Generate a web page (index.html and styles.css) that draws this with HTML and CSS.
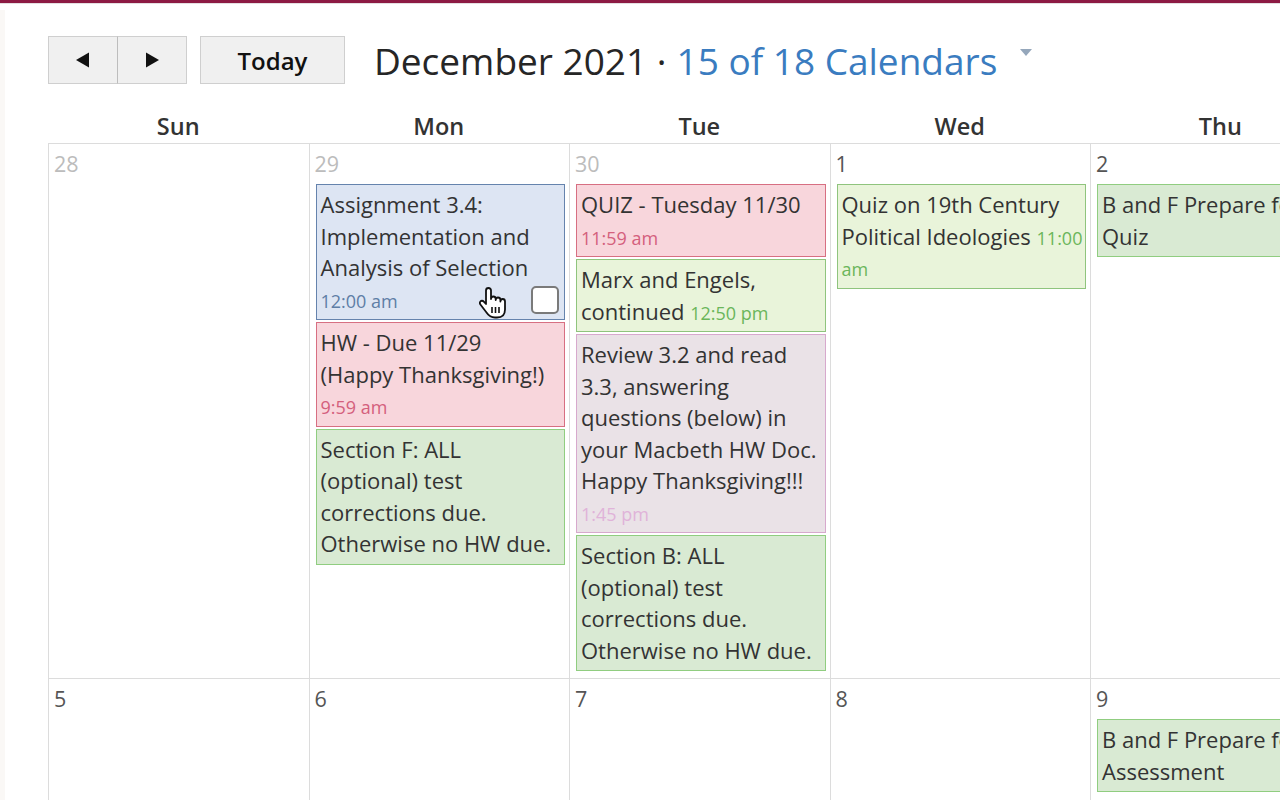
FILE: index.html
```html
<!DOCTYPE html>
<html lang="en">
<head>
<meta charset="utf-8">
<title>December 2021 Calendar</title>
<link rel="stylesheet" href="styles.css">
</head>
<body>
<div class="topbar"></div>
<div class="layout">
  <div class="edge"></div>
  <main class="main">
    <div class="toolbar">
      <div class="btn-group">
        <button class="btn btn-arrow" aria-label="Previous"><svg width="18" height="18" viewBox="0 0 18 18"><path d="M2 9 L15 1.5 V16.5 Z" fill="#111"/></svg></button>
        <button class="btn btn-arrow" aria-label="Next"><svg width="18" height="18" viewBox="0 0 18 18"><path d="M16 9 L3 1.5 V16.5 Z" fill="#111"/></svg></button>
      </div>
      <button class="btn btn-today">Today</button>
      <h1 class="title">December 2021 · <span class="cals">15 of 18 Calendars</span><span class="caret"></span></h1>
    </div>

    <div class="dow">
      <div>Sun</div><div>Mon</div><div>Tue</div><div>Wed</div><div>Thu</div><div>Fri</div><div>Sat</div>
    </div>

    <div class="week week-1">
      <div class="cell"><div class="num other">28</div></div>
      <div class="cell">
        <div class="num other">29</div>
        <div class="ev ev-blue">Assignment 3.4: Implementation and Analysis of Selection <span class="time">12:00 am</span>
          <span class="check"></span>
          <svg class="cursor" width="30" height="34" viewBox="0 0 30 34"><path d="M9.5 2 C8 2 7 3 7 4.5 V18 L4.8 15.6 C3.8 14.5 2.2 14.5 1.4 15.5 C0.6 16.4 0.8 17.8 1.6 18.8 L7.5 26.5 C9.5 29.5 12 31.5 16 31.5 H18 C23 31.5 26 28.5 26 23.5 V15.5 C26 14 25 13 23.7 13 C22.4 13 21.4 14 21.4 15.5 V14 C21.4 12.5 20.4 11.5 19 11.5 C17.6 11.5 16.7 12.5 16.7 14 V13 C16.7 11.5 15.7 10.5 14.3 10.5 C13 10.5 12 11.5 12 13 V4.5 C12 3 11 2 9.5 2 Z" fill="#fff" stroke="#111" stroke-width="1.8" stroke-linejoin="round"/><path d="M13 21 V27 M16.5 21 V27 M20 21 V27" stroke="#111" stroke-width="1.6"/></svg>
        </div>
        <div class="ev ev-pink">HW - Due 11/29 <span class="keep">(Happy Thanksgiving!)</span> <span class="time">9:59 am</span></div>
        <div class="ev ev-green">Section F: ALL (optional) test corrections due. Otherwise no HW due.</div>
      </div>
      <div class="cell">
        <div class="num other">30</div>
        <div class="ev ev-pink">QUIZ - Tuesday 11/30 <span class="time">11:59 am</span></div>
        <div class="ev ev-lime">Marx and Engels, continued <span class="time">12:50 pm</span></div>
        <div class="ev ev-purple">Review 3.2 and read 3.3, answering questions (below) in your Macbeth HW Doc. Happy Thanksgiving!!! <span class="time">1:45 pm</span></div>
        <div class="ev ev-green">Section B: ALL (optional) test corrections due. Otherwise no HW due.</div>
      </div>
      <div class="cell">
        <div class="num">1</div>
        <div class="ev ev-lime">Quiz on 19th Century Political Ideologies <span class="time">11:00 am</span></div>
      </div>
      <div class="cell">
        <div class="num">2</div>
        <div class="ev ev-green">B and F Prepare for Quiz</div>
      </div>
      <div class="cell"><div class="num">3</div></div>
      <div class="cell"><div class="num">4</div></div>
    </div>

    <div class="week week-2">
      <div class="cell"><div class="num">5</div></div>
      <div class="cell"><div class="num">6</div></div>
      <div class="cell"><div class="num">7</div></div>
      <div class="cell"><div class="num">8</div></div>
      <div class="cell">
        <div class="num">9</div>
        <div class="ev ev-green">B and F Prepare for Assessment</div>
      </div>
      <div class="cell"><div class="num">10</div></div>
      <div class="cell"><div class="num">11</div></div>
    </div>
  </main>
</div>
</body>
</html>
```

FILE: styles.css
```css
html, body {
  margin: 0;
  padding: 0;
  width: 1280px;
  height: 800px;
  overflow: hidden;
  background: #fff;
  font-family: "Open Sans", "Noto Sans", sans-serif;
  color: #333;
}

.topbar {
  height: 3px;
  background: #8c1a43;
  border-bottom: 1px solid #e4dfe1;
}

.layout {
  display: flex;
}

.edge {
  width: 5px;
  flex: none;
  background: #faf8f6;
  margin-top: 6px;
  height: 800px;
}

.main {
  flex: none;
  padding-left: 43px;
}

.toolbar {
  display: flex;
  align-items: center;
  height: 48px;
  margin-top: 32px;
}

.btn-group {
  display: flex;
}

.btn {
  height: 48px;
  background: #f0f0f0;
  border: 1px solid #cfcfcf;
  font-family: inherit;
  color: #111;
  padding: 0;
  display: flex;
  align-items: center;
  justify-content: center;
}

.btn-arrow {
  width: 70px;
}

.btn-arrow + .btn-arrow {
  border-left: 1px solid #bdbdbd;
  width: 70px;
  margin-left: -1px;
}

.btn-today {
  width: 145px;
  margin-left: 13px;
  font-size: 24px;
  font-weight: 600;
}

.title {
  margin: 0 0 0 29px;
  font-size: 37px;
  font-weight: 500;
  color: #262626;
  white-space: nowrap;
  display: flex;
  align-items: center;
}

.title .cals {
  color: #3a7cc0;
  margin-left: 10px;
  font-weight: 500;
}

.caret {
  width: 0;
  height: 0;
  border-left: 6px solid transparent;
  border-right: 6px solid transparent;
  border-top: 7px solid #95a7bb;
  margin-left: 23px;
  margin-top: -15px;
}

.dow {
  display: grid;
  grid-template-columns: repeat(7, 260.5px);
  margin-top: 24px;
  padding-top: 3px;
  height: 32px;
  font-size: 23.5px;
  font-weight: 600;
  color: #333;
  text-align: center;
  line-height: 30px;
}

.week {
  display: grid;
  grid-template-columns: repeat(7, 260.5px);
}

.week-1 { height: 535px; }
.week-2 { height: 200px; }

.cell {
  border-left: 1px solid #dcdcdc;
  border-top: 1px solid #dcdcdc;
  padding: 0 4px 0 5px;
  box-sizing: border-box;
  min-width: 0;
}

.num {
  font-size: 21.5px;
  line-height: 30px;
  padding-top: 5px;
  margin-bottom: 5px;
  color: #555;
}

.num.other {
  color: #bcbcbc;
}

.ev {
  position: relative;
  margin-left: 1px;
  border: 1px solid;
  padding: 4px 1px 4px 4px;
  font-size: 22px;
  line-height: 31.5px;
  color: #333;
  margin-bottom: 2px;
}

.keep {
  white-space: nowrap;
}

.time {
  font-size: 18px;
  line-height: 20px;
}

.ev-blue   { background: #dde5f3; border-color: #6583ad; }
.ev-blue .time { color: #5e7ea6; }

.ev-pink   { background: #f8d6dc; border-color: #d76f82; }
.ev-pink .time { color: #d4607c; }

.ev-green  { background: #d9ead3; border-color: #90cd80; }

.ev-lime   { background: #e9f4da; border-color: #8fc47d; }
.ev-lime .time { color: #6bb65a; }

.ev-purple { background: #eae2e7; border-color: #d7a9cd; }
.ev-purple .time { color: #e0b3d9; }

.check {
  position: absolute;
  right: 5px;
  bottom: 5px;
  width: 28px;
  height: 28px;
  box-sizing: border-box;
  border: 2px solid #7a7a7a;
  border-radius: 5px;
  background: #fff;
}

.cursor {
  position: absolute;
  left: 162px;
  top: 101px;
}
```
